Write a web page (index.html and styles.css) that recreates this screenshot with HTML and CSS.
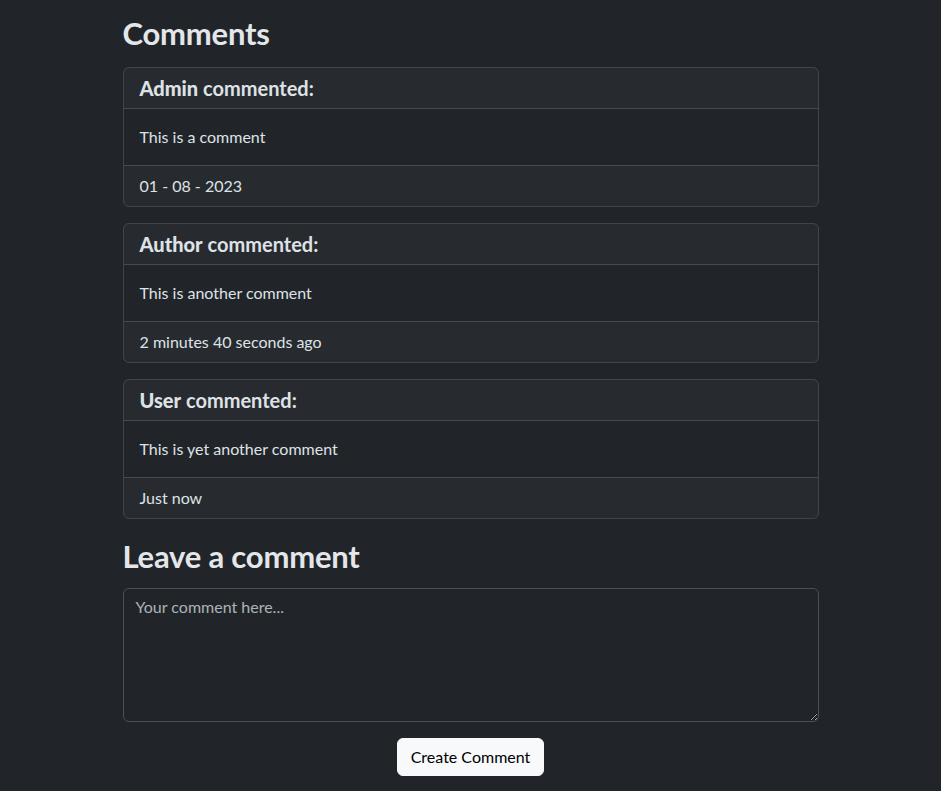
FILE: index.html
```html
<!DOCTYPE html>
<html lang="en">
<head>
<meta charset="utf-8">
<title>Comments</title>
<link rel="stylesheet" href="styles.css">
</head>
<body>
<main class="container">
  <h2 class="title">Comments</h2>

  <div class="card">
    <div class="card-header"><h5 class="author"><strong>Admin</strong> commented:</h5></div>
    <div class="card-body">This is a comment</div>
    <div class="card-footer">01 - 08 - 2023</div>
  </div>

  <div class="card">
    <div class="card-header"><h5 class="author"><strong>Author</strong> commented:</h5></div>
    <div class="card-body">This is another comment</div>
    <div class="card-footer">2 minutes 40 seconds ago</div>
  </div>

  <div class="card">
    <div class="card-header"><h5 class="author"><strong>User</strong> commented:</h5></div>
    <div class="card-body">This is yet another comment</div>
    <div class="card-footer">Just now</div>
  </div>

  <h2 class="title leave">Leave a comment</h2>
  <form class="comment-form">
    <textarea class="form-control" rows="5" placeholder="Your comment here..."></textarea>
    <div class="actions">
      <button type="button" class="btn">Create Comment</button>
    </div>
  </form>
</main>
</body>
</html>
```
FILE: styles.css
```css
* { box-sizing: border-box; }
html, body { margin: 0; padding: 0; }
body {
  background: #212529;
  color: #dee2e6;
  font-family: Lato, "Liberation Sans", sans-serif;
  font-size: 16px;
  line-height: 1.5;
}
.container {
  width: 696px;
  margin: 0 auto;
  padding-top: 14px;
}
.title {
  font-size: 31px;
  font-weight: 700;
  line-height: 38.4px;
  margin: 0 0 15px 0;
  color: #e4e7ea;
  letter-spacing: -0.2px;
}
.title.leave {
  margin-top: 18px;
  margin-bottom: 12px;
}
.card {
  border: 1px solid rgba(255, 255, 255, 0.15);
  border-radius: 6px;
  margin-bottom: 16px;
  overflow: hidden;
}
.card-header {
  padding: 8px 16px;
  background: rgba(255, 255, 255, 0.03);
  border-bottom: 1px solid rgba(255, 255, 255, 0.15);
}
.author {
  margin: 0;
  font-size: 20px;
  line-height: 24px;
  font-weight: 700;
}
.author strong { font-weight: 900; }
.card-body {
  padding: 16px;
}
.card-footer {
  padding: 8px 16px;
  background: rgba(255, 255, 255, 0.03);
  border-top: 1px solid rgba(255, 255, 255, 0.15);
}
.comment-form { margin: 0; }
.form-control {
  display: block;
  width: 100%;
  height: 134px;
  padding: 6px 12px;
  font-family: inherit;
  font-size: 16px;
  line-height: 24px;
  color: #dee2e6;
  background: #212529;
  border: 1px solid #495057;
  border-radius: 6px;
  resize: vertical;
}
.form-control::placeholder {
  color: rgba(222, 226, 230, 0.75);
}
.actions {
  display: flex;
  justify-content: center;
  margin-top: 16px;
}
.btn {
  font-family: inherit;
  font-size: 16px;
  line-height: 24px;
  padding: 6px 13px;
  color: #000;
  background: #f8f9fa;
  border: 1px solid #f8f9fa;
  border-radius: 6px;
}
```
